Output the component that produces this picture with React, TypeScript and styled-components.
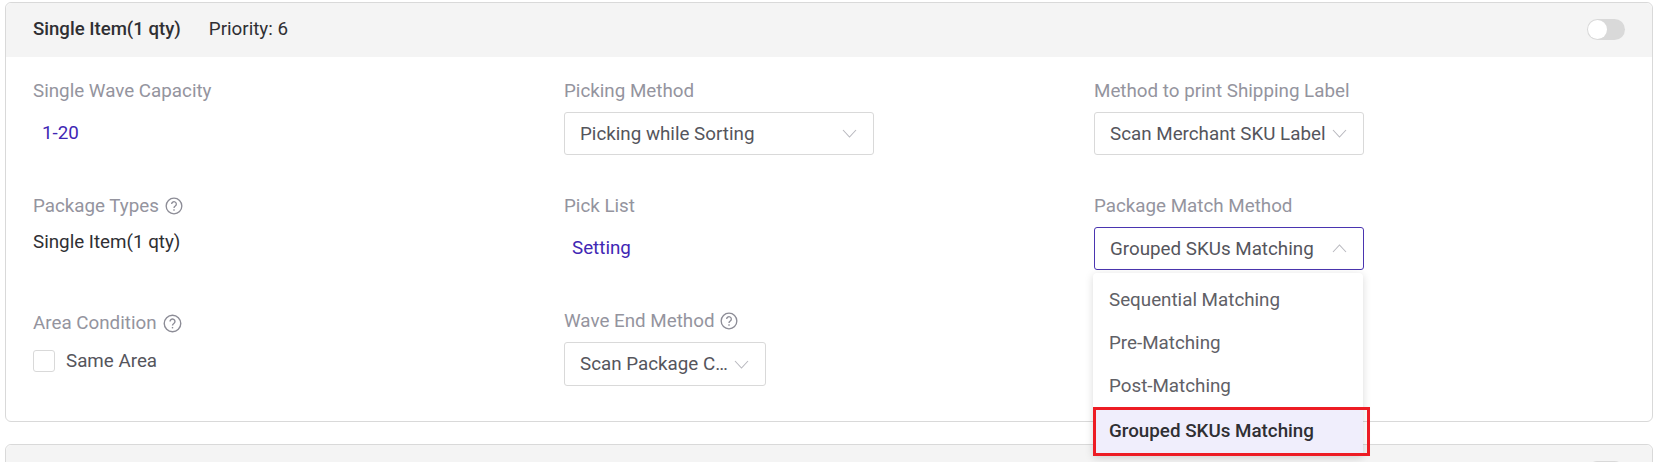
import React from "react";
import styled, { createGlobalStyle } from "styled-components";

const Global = createGlobalStyle`
  html, body { margin: 0; padding: 0; background: #fff; height: 462px; overflow: hidden; }
  body { font-family: Roboto, "Liberation Sans", sans-serif; }
`;

const Page = styled.div`
  display: flex;
  flex-direction: column;
  gap: 22px;
  padding: 2px 19px 0 5px;
  height: 462px;
  box-sizing: border-box;
  overflow: hidden;
`;

const Card = styled.section`
  border: 1px solid #d9d9d9;
  border-radius: 6px;
  flex: none;
`;

const CardHeader = styled.header`
  display: flex;
  align-items: center;
  box-sizing: border-box;
  height: 54px;
  padding: 0 27px 2px;
  background: #f4f4f4;
  border-radius: 6px 6px 0 0;
  font-size: 18.8px;
  color: #2f2f33;
`;

const Title = styled.span`
  font-size: 18.6px;
  font-weight: 500;
  margin-right: 28px;
`;

const Toggle = styled.span`
  margin-left: auto;
  width: 38px;
  height: 21px;
  border-radius: 11px;
  background: #d9d9d9;
  position: relative;
  &::after {
    content: "";
    position: absolute;
    left: 1px;
    top: 1px;
    width: 19px;
    height: 19px;
    border-radius: 50%;
    background: #fff;
  }
`;

const Body = styled.div`
  display: grid;
  grid-template-columns: 531px 530px 1fr;
  grid-template-rows: 115px 115px 1fr;
  padding: 22px 27px 0;
  height: 364px;
  box-sizing: border-box;
`;

const Field = styled.div`
  position: relative;
  display: flex;
  flex-direction: column;
  align-items: flex-start;
`;

const Label = styled.div<{ $top?: number }>`
  display: flex;
  align-items: center;
  gap: 6px;
  height: 24px;
  margin-top: ${(p) => p.$top ?? 0}px;
  font-size: 18.8px;
  color: #94949e;
`;

const Value = styled.div<{ $top: number; $indent: number; $accent?: boolean }>`
  margin-top: ${(p) => p.$top}px;
  padding-left: ${(p) => p.$indent}px;
  font-size: 18.8px;
  line-height: 24px;
  color: ${(p) => (p.$accent ? "#3f27b4" : "#2f2f33")};
`;

const Select = styled.div<{ $width: number; $height?: number; $open?: boolean }>`
  margin-top: 9px;
  box-sizing: border-box;
  width: ${(p) => p.$width}px;
  height: ${(p) => p.$height ?? 43}px;
  display: flex;
  align-items: center;
  padding: 0 16px 0 15px;
  background: #fff;
  border: 1px solid ${(p) => (p.$open ? "#4a35b0" : "#d9d9d9")};
  border-radius: 3px;
  font-size: 18.8px;
  color: #55555c;
`;

const SelectText = styled.span`
  white-space: nowrap;
  overflow: hidden;
  text-overflow: ellipsis;
  flex: 1;
  min-width: 0;
`;

const Chevron = styled.svg`
  flex: none;
  width: 15px;
  height: 9px;
  margin-left: 5px;
  fill: none;
  stroke: #b9b9bf;
  stroke-width: 1.1;
`;

const CheckRow = styled.label`
  display: flex;
  align-items: center;
  gap: 11px;
  margin-top: 15px;
  font-size: 18.8px;
  color: #55555c;
`;

const Box = styled.span`
  width: 22px;
  height: 22px;
  box-sizing: border-box;
  border: 1px solid #d9d9d9;
  border-radius: 3px;
`;

const Menu = styled.ul`
  position: absolute;
  left: -1px;
  top: 79px;
  width: 270px;
  height: 183px;
  margin: 0;
  padding: 5px 0 0;
  box-sizing: border-box;
  list-style: none;
  background: #fff;
  border-radius: 4px;
  box-shadow: 0 2px 8px rgba(0, 0, 0, 0.15);
  z-index: 2;
`;

const MenuItem = styled.li<{ $active?: boolean }>`
  position: relative;
  height: ${(p) => (p.$active ? 47 : 43)}px;
  display: flex;
  align-items: center;
  padding-left: 16px;
  font-size: 18.8px;
  color: ${(p) => (p.$active ? "#2f2f33" : "#606066")};
  font-weight: ${(p) => (p.$active ? 500 : 400)};
  background: ${(p) => (p.$active ? "#f0eefc" : "transparent")};
`;

const Highlight = styled.span`
  position: absolute;
  left: 0;
  top: 0;
  width: 277px;
  height: 49px;
  box-sizing: border-box;
  border: 3px solid #ed1c24;
`;

const Help = ({ size = 18 }: { size?: number }) => (
  <svg width={size} height={size} viewBox="0 0 17 17" fill="none" stroke="#8c8c96" strokeWidth="1.25">
    <circle cx="8.5" cy="8.5" r="7.4" />
    <path d="M6.3 6.7a2.2 2.2 0 1 1 3.4 1.8c-.8.5-1.2.9-1.2 1.8" />
    <path d="M8.5 11.6v1.3" />
  </svg>
);

const Down = () => (
  <Chevron viewBox="0 0 15 9">
    <path d="M1 1l6.5 7L14 1" />
  </Chevron>
);

const Up = () => (
  <Chevron viewBox="0 0 15 9">
    <path d="M1 8l6.5-7L14 8" />
  </Chevron>
);

export default function App() {
  return (
    <>
      <Global />
      <Page>
        <Card>
          <CardHeader>
            <Title>Single Item(1 qty)</Title>
            <span>Priority: 6</span>
            <Toggle />
          </CardHeader>
          <Body>
            <Field>
              <Label>Single Wave Capacity</Label>
              <Value $top={18} $indent={9} $accent>1-20</Value>
            </Field>
            <Field>
              <Label>Picking Method</Label>
              <Select $width={310}>
                <SelectText>Picking while Sorting</SelectText>
                <Down />
              </Select>
            </Field>
            <Field>
              <Label>Method to print Shipping Label</Label>
              <Select $width={270}>
                <SelectText>Scan Merchant SKU Label</SelectText>
                <Down />
              </Select>
            </Field>
            <Field>
              <Label>Package Types <Help /></Label>
              <Value $top={12} $indent={0}>Single Item(1 qty)</Value>
            </Field>
            <Field>
              <Label>Pick List</Label>
              <Value $top={18} $indent={8} $accent>Setting</Value>
            </Field>
            <Field>
              <Label>Package Match Method</Label>
              <Select $width={270} $open>
                <SelectText>Grouped SKUs Matching</SelectText>
                <Up />
              </Select>
              <Menu>
                <MenuItem>Sequential Matching</MenuItem>
                <MenuItem>Pre-Matching</MenuItem>
                <MenuItem>Post-Matching</MenuItem>
                <MenuItem $active>
                  Grouped SKUs Matching
                  <Highlight />
                </MenuItem>
              </Menu>
            </Field>
            <Field>
              <Label $top={2}>Area Condition <Help size={19} /></Label>
              <CheckRow><Box />Same Area</CheckRow>
            </Field>
            <Field>
              <Label>Wave End Method <Help /></Label>
              <Select $width={202} $height={44}>
                <SelectText>Scan Package Completion</SelectText>
                <Down />
              </Select>
            </Field>
            <Field />
          </Body>
        </Card>
        <Card>
          <CardHeader>
            <Title>Same SKUs (Many qty)</Title>
            <span>Priority: 5</span>
            <Toggle />
          </CardHeader>
        </Card>
      </Page>
    </>
  );
}
